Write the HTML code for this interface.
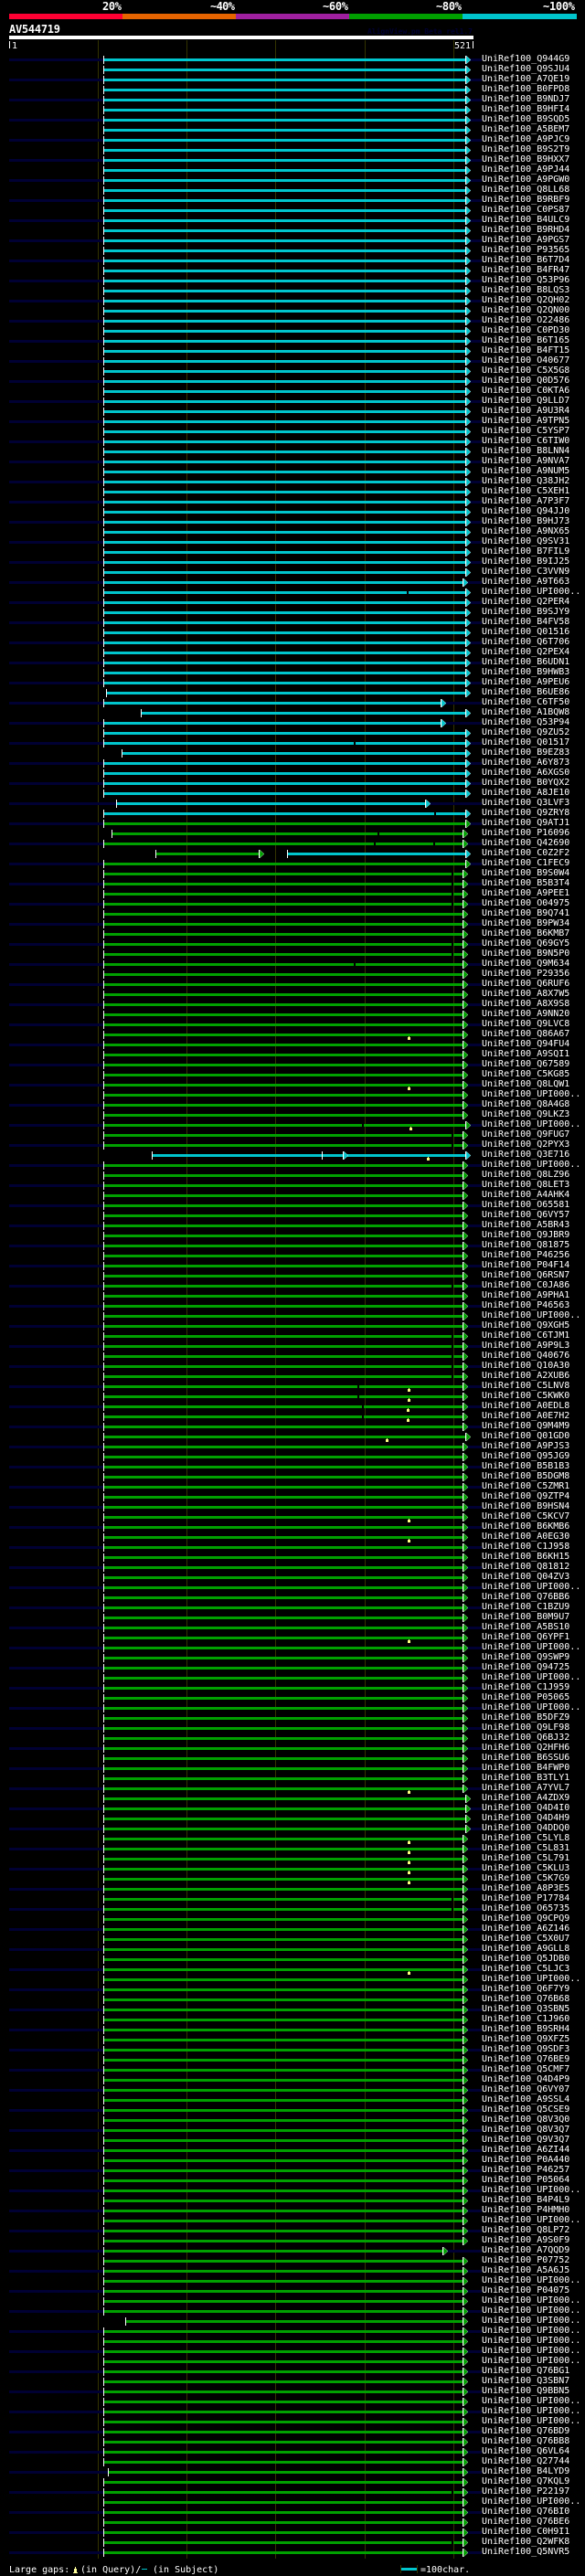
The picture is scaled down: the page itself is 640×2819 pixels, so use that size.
<!DOCTYPE html>
<html><head><meta charset="utf-8"><title>AV544719</title>
<style>
html,body{margin:0;padding:0;background:#000;width:640px;height:2819px;overflow:hidden}
#s{position:absolute;left:0;top:0}
pre{position:absolute;left:527px;top:59px;margin:0;font:10px/11px "DejaVu Sans Mono","Liberation Mono",monospace;color:#fff}
text{font-family:"DejaVu Sans Mono","Liberation Mono",monospace;fill:#fff}
.b{font-weight:bold;font-size:12px}
.n{font-size:10px}
</style></head><body>
<svg id="s" width="640" height="2819" viewBox="0 0 640 2819" xmlns="http://www.w3.org/2000/svg" shape-rendering="crispEdges">
<defs>
<g id="ac" shape-rendering="auto"><path d="M1 0L6 4.5L1 9Z" fill="#00c5cd" stroke="#fff" stroke-width=".35"/><rect width="1" height="9" fill="#fff"/></g>
<g id="ag" shape-rendering="auto"><path d="M1 0L6 4.5L1 9Z" fill="#00a000" stroke="#fff" stroke-width=".35"/><rect width="1" height="9" fill="#fff"/></g>

<g id="n1"><rect x="10" y="0" width="103" height="3" fill="#000033"/><rect x="510" y="0" width="17" height="3" fill="#000033"/></g>
<g id="n5"><use href="#n1"/><use href="#n1" y="22"/><use href="#n1" y="44"/><use href="#n1" y="66"/><use href="#n1" y="88"/></g>
<g id="n25"><use href="#n5"/><use href="#n5" y="110"/><use href="#n5" y="220"/><use href="#n5" y="330"/><use href="#n5" y="440"/></g>

<g id="c1"><rect x="113" y="0" width="1" height="9" fill="#fff"/><rect x="114" y="3" width="395" height="3" fill="#00c5cd"/><use href="#ac" x="509"/></g>
<g id="c5"><use href="#c1"/><use href="#c1" y="11"/><use href="#c1" y="22"/><use href="#c1" y="33"/><use href="#c1" y="44"/></g>
<g id="c25"><use href="#c5"/><use href="#c5" y="55"/><use href="#c5" y="110"/><use href="#c5" y="165"/><use href="#c5" y="220"/></g>

<g id="g1"><rect x="113" y="0" width="1" height="9" fill="#fff"/><rect x="114" y="3" width="392" height="3" fill="#00a000"/><use href="#ag" x="506"/></g>
<g id="g5"><use href="#g1"/><use href="#g1" y="11"/><use href="#g1" y="22"/><use href="#g1" y="33"/><use href="#g1" y="44"/></g>
<g id="g25"><use href="#g5"/><use href="#g5" y="55"/><use href="#g5" y="110"/><use href="#g5" y="165"/><use href="#g5" y="220"/></g>

<path id="er" d="M506 633h10v9h-10zM482 765h34v9h-34zM482 787h34v9h-34zM465 875h51v9h-51zM484 2459h30v9h-30zM113 754h3v9h-3zM113 776h41v9h-41zM113 820h20v9h-20zM113 875h14v9h-14zM113 908h9v9h-9zM113 2536h24v9h-24zM113 2701h5v9h-5zM113 930h403v9h-403zM113 1260h403v9h-403zM506 897h8v9h-8zM506 941h8v9h-8zM506 1227h8v9h-8zM506 1568h8v9h-8zM506 1964h8v9h-8zM506 1975h8v9h-8zM506 1986h8v9h-8zM506 1997h8v9h-8z"/>
<clipPath id="cl"><use href="#er"/></clipPath>
<g id="grid" fill="#333300"><rect x="107" y="44" width="1" height="2756"/><rect x="204" y="44" width="1" height="2756"/><rect x="301" y="44" width="1" height="2756"/><rect x="399" y="44" width="1" height="2756"/><rect x="496" y="44" width="1" height="2756"/></g>
</defs>

<rect x="10" y="15" width="124" height="6" fill="#ff0033"/>
<rect x="134" y="15" width="124" height="6" fill="#e66400"/>
<rect x="258" y="15" width="124" height="6" fill="#a020a0"/>
<rect x="382" y="15" width="124" height="6" fill="#00a000"/>
<rect x="506" y="15" width="125" height="6" fill="#00c5cd"/>
<text class="b" x="112" y="11" textLength="21">20%</text>
<text class="b" x="230" y="11" textLength="27">~40%</text>
<text class="b" x="353" y="11" textLength="28">~60%</text>
<text class="b" x="477" y="11" textLength="28">~80%</text>
<text class="b" x="594" y="11" textLength="35">~100%</text>
<text class="b" x="10" y="36" textLength="56">AV544719</text>
<text x="402" y="37" style="fill:#000033;font-size:8px;font-weight:bold" textLength="115">AlignView.pm Beta rel1.7</text>
<rect x="10" y="39" width="508" height="4" fill="#fff"/>
<rect x="10" y="45" width="1" height="8" fill="#fff"/>
<text class="n" x="13" y="53">1</text>
<text class="n" x="497" y="53">521</text>
<rect x="517" y="45" width="1" height="8" fill="#fff"/>

<use href="#grid"/>
<g transform="translate(0,64)"><use href="#n25"/><use href="#n25" y="550"/><use href="#n25" y="1100"/><use href="#n25" y="1650"/><use href="#n25" y="2200"/></g>

<use href="#c25" y="61"/><use href="#c25" y="336"/><use href="#c25" y="611"/><use href="#c1" y="886"/>
<use href="#g25" y="897"/><use href="#g25" y="1172"/><use href="#g25" y="1447"/><use href="#g25" y="1722"/><use href="#g25" y="1997"/><use href="#g25" y="2272"/>
<use href="#g5" y="2547"/><use href="#g5" y="2602"/><use href="#g5" y="2657"/><use href="#g5" y="2712"/>
<use href="#g1" y="2767"/><use href="#g1" y="2778"/><use href="#g1" y="2789"/>

<path d="M445 647h2v3h-2zM387 812h2v3h-2zM475 889h2v3h-2zM413 911h2v3h-2zM409 922h2v3h-2zM474 922h2v3h-2zM494 955h2v3h-2zM494 966h2v3h-2zM494 977h2v3h-2zM494 988h2v3h-2zM494 1032h2v3h-2zM494 1043h2v3h-2zM387 1054h2v3h-2zM396 1230h2v3h-2zM494 1241h2v3h-2zM494 1252h2v3h-2zM494 1406h2v3h-2zM494 1461h2v3h-2zM494 1472h2v3h-2zM494 1483h2v3h-2zM494 1494h2v3h-2zM494 1505h2v3h-2zM391 1516h2v3h-2zM391 1527h2v3h-2zM396 1538h2v3h-2zM396 1549h2v3h-2zM494 2077h2v3h-2zM494 2088h2v3h-2zM494 2726h2v3h-2zM494 2781h2v3h-2z" fill="#000"/>

<use href="#er" fill="#000"/>
<g clip-path="url(#cl)"><use href="#grid"/></g>

<g fill="#000033">
<rect x="511" y="636" width="5" height="3"/>
<rect x="486" y="768" width="30" height="3"/>
<rect x="486" y="790" width="30" height="3"/>
<rect x="469" y="878" width="47" height="3"/>
<rect x="488" y="2462" width="27" height="3"/>
<rect x="113" y="878" width="14" height="3"/>
<rect x="113" y="2704" width="5" height="3"/>
</g>
<g fill="#fff">
<rect x="116" y="754" width="1" height="9"/>
<rect x="154" y="776" width="1" height="9"/>
<rect x="133" y="820" width="1" height="9"/>
<rect x="127" y="875" width="1" height="9"/>
<rect x="122" y="908" width="1" height="9"/>
<rect x="137" y="2536" width="1" height="9"/>
<rect x="118" y="2701" width="1" height="9"/>
<rect x="170" y="930" width="1" height="9"/>
<rect x="314" y="930" width="1" height="9"/>
<rect x="166" y="1260" width="1" height="9"/>
</g>
<use href="#ac" x="506" y="633"/>
<use href="#ac" x="482" y="765"/>
<use href="#ac" x="482" y="787"/>
<use href="#ac" x="465" y="875"/>
<use href="#ag" x="484" y="2459"/>
<rect x="171" y="933" width="112" height="3" fill="#00a000"/>
<use href="#ag" x="283" y="930"/>
<rect x="315" y="933" width="194" height="3" fill="#00c5cd"/>
<use href="#ac" x="509" y="930"/>
<rect x="167" y="1263" width="342" height="3" fill="#00c5cd"/>
<rect x="352" y="1260" width="1" height="9" fill="#fff"/>
<use href="#ac" x="375" y="1260"/>
<use href="#ac" x="509" y="1260"/>
<g fill="#00a000">
<rect x="506" y="900" width="3" height="3"/><rect x="506" y="944" width="3" height="3"/><rect x="506" y="1230" width="3" height="3"/><rect x="506" y="1571" width="3" height="3"/><rect x="506" y="1967" width="3" height="3"/><rect x="506" y="1978" width="3" height="3"/><rect x="506" y="1989" width="3" height="3"/><rect x="506" y="2000" width="3" height="3"/>
</g>
<use href="#ag" x="509" y="897"/><use href="#ag" x="509" y="941"/><use href="#ag" x="509" y="1227"/><use href="#ag" x="509" y="1568"/><use href="#ag" x="509" y="1964"/><use href="#ag" x="509" y="1975"/><use href="#ag" x="509" y="1986"/><use href="#ag" x="509" y="1997"/>

<path fill="#ffff80" d="M447 1134h1v1h1v3h-3v-3h1zM447 1189h1v1h1v3h-3v-3h1zM449 1233h1v1h1v3h-3v-3h1zM468 1266h1v1h1v3h-3v-3h1zM447 1519h1v1h1v3h-3v-3h1zM447 1530h1v1h1v3h-3v-3h1zM446 1541h1v1h1v3h-3v-3h1zM446 1552h1v1h1v3h-3v-3h1zM423 1574h1v1h1v3h-3v-3h1zM447 1662h1v1h1v3h-3v-3h1zM447 1684h1v1h1v3h-3v-3h1zM447 1794h1v1h1v3h-3v-3h1zM447 1959h1v1h1v3h-3v-3h1zM447 2014h1v1h1v3h-3v-3h1zM447 2025h1v1h1v3h-3v-3h1zM447 2036h1v1h1v3h-3v-3h1zM447 2047h1v1h1v3h-3v-3h1zM447 2058h1v1h1v3h-3v-3h1zM447 2157h1v1h1v3h-3v-3h1z"/>

<text class="n" x="10" y="2815">Large gaps:</text>
<path fill="#ffff99" d="M82 2809h1v2h1v4h1v1h-5v-1h1v-4h1z"/>
<text class="n" x="88" y="2815">(in Query)/</text>
<rect x="155" y="2811" width="6" height="1" fill="#00c5cd"/>
<text class="n" x="167" y="2815">(in Subject)</text>
<rect x="438" y="2807" width="1" height="9" fill="#333300"/>
<rect x="439" y="2810" width="17" height="3" fill="#00c5cd"/>
<rect x="456" y="2807" width="1" height="9" fill="#333300"/>
<text class="n" x="460" y="2815">=100char.</text>
</svg>
<pre>UniRef100_Q944G9
UniRef100_Q9SJU4
UniRef100_A7QE19
UniRef100_B0FPD8
UniRef100_B9NDJ7
UniRef100_B9HFI4
UniRef100_B9SQD5
UniRef100_A5BEM7
UniRef100_A9PJC9
UniRef100_B9S2T9
UniRef100_B9HXX7
UniRef100_A9PJ44
UniRef100_A9PGW0
UniRef100_Q8LL68
UniRef100_B9RBF9
UniRef100_C0PS87
UniRef100_B4ULC9
UniRef100_B9RHD4
UniRef100_A9PGS7
UniRef100_P93565
UniRef100_B6T7D4
UniRef100_B4FR47
UniRef100_Q53P96
UniRef100_B8LQS3
UniRef100_Q2QH02
UniRef100_Q2QN00
UniRef100_O22486
UniRef100_C0PD30
UniRef100_B6T165
UniRef100_B4FT15
UniRef100_O40677
UniRef100_C5X5G8
UniRef100_Q0D576
UniRef100_C0KTA6
UniRef100_Q9LLD7
UniRef100_A9U3R4
UniRef100_A9TPN5
UniRef100_C5YSP7
UniRef100_C6TIW0
UniRef100_B8LNN4
UniRef100_A9NVA7
UniRef100_A9NUM5
UniRef100_Q38JH2
UniRef100_C5XEH1
UniRef100_A7P3F7
UniRef100_Q94JJ0
UniRef100_B9HJ73
UniRef100_A9NX65
UniRef100_Q9SV31
UniRef100_B7FIL9
UniRef100_B9IJ25
UniRef100_C3VVN9
UniRef100_A9T663
UniRef100_UPI000..
UniRef100_Q2PER4
UniRef100_B9SJY9
UniRef100_B4FV58
UniRef100_Q01516
UniRef100_Q6T706
UniRef100_Q2PEX4
UniRef100_B6UDN1
UniRef100_B9HWB3
UniRef100_A9PEU6
UniRef100_B6UE86
UniRef100_C6TF50
UniRef100_A1BQW8
UniRef100_Q53P94
UniRef100_Q9ZU52
UniRef100_Q01517
UniRef100_B9EZ83
UniRef100_A6Y873
UniRef100_A6XGS0
UniRef100_B0YQX2
UniRef100_A8JE10
UniRef100_Q3LVF3
UniRef100_Q9ZRY8
UniRef100_Q9ATJ1
UniRef100_P16096
UniRef100_Q42690
UniRef100_C0Z2F2
UniRef100_C1FEC9
UniRef100_B9S0W4
UniRef100_B5B3T4
UniRef100_A9PEE1
UniRef100_O04975
UniRef100_B9Q741
UniRef100_B9PW34
UniRef100_B6KMB7
UniRef100_Q69GY5
UniRef100_B9N5P0
UniRef100_Q9M634
UniRef100_P29356
UniRef100_Q6RUF6
UniRef100_A8X7W5
UniRef100_A8X9S8
UniRef100_A9NN20
UniRef100_Q9LVC8
UniRef100_Q86A67
UniRef100_Q94FU4
UniRef100_A9SQI1
UniRef100_Q67589
UniRef100_C5KG85
UniRef100_Q8LQW1
UniRef100_UPI000..
UniRef100_Q8A4G8
UniRef100_Q9LKZ3
UniRef100_UPI000..
UniRef100_Q9FUG7
UniRef100_Q2PYX3
UniRef100_Q3E716
UniRef100_UPI000..
UniRef100_Q8LZ96
UniRef100_Q8LET3
UniRef100_A4AHK4
UniRef100_O65581
UniRef100_Q6VY57
UniRef100_A5BR43
UniRef100_Q9JBR9
UniRef100_Q81875
UniRef100_P46256
UniRef100_P04F14
UniRef100_Q6RSN7
UniRef100_C0JA86
UniRef100_A9PHA1
UniRef100_P46563
UniRef100_UPI000..
UniRef100_Q9XGH5
UniRef100_C6TJM1
UniRef100_A9P9L3
UniRef100_Q40676
UniRef100_Q10A30
UniRef100_A2XUB6
UniRef100_C5LNV8
UniRef100_C5KWK0
UniRef100_A0EDL8
UniRef100_A0E7H2
UniRef100_Q9M4M9
UniRef100_Q01GD0
UniRef100_A9PJS3
UniRef100_Q95JG9
UniRef100_B5B1B3
UniRef100_B5DGM8
UniRef100_C5ZMR1
UniRef100_Q9ZTP4
UniRef100_B9HSN4
UniRef100_C5KCV7
UniRef100_B6KMB6
UniRef100_A0EG30
UniRef100_C1J958
UniRef100_B6KH15
UniRef100_Q81812
UniRef100_Q04ZV3
UniRef100_UPI000..
UniRef100_Q76BB6
UniRef100_C1BZU9
UniRef100_B0M9U7
UniRef100_A5BS10
UniRef100_Q6YPF1
UniRef100_UPI000..
UniRef100_Q9SWP9
UniRef100_Q94725
UniRef100_UPI000..
UniRef100_C1J959
UniRef100_P05065
UniRef100_UPI000..
UniRef100_B5DFZ9
UniRef100_Q9LF98
UniRef100_Q6BJ32
UniRef100_Q2HFH6
UniRef100_B6SSU6
UniRef100_B4FWP0
UniRef100_B3TLY1
UniRef100_A7YVL7
UniRef100_A4ZDX9
UniRef100_Q4D4I0
UniRef100_Q4D4H9
UniRef100_Q4DDQ0
UniRef100_C5LYL8
UniRef100_C5L831
UniRef100_C5L791
UniRef100_C5KLU3
UniRef100_C5K7G9
UniRef100_A8P3E5
UniRef100_P17784
UniRef100_O65735
UniRef100_Q9CPQ9
UniRef100_A6Z146
UniRef100_C5X0U7
UniRef100_A9GLL8
UniRef100_Q5JDB0
UniRef100_C5LJC3
UniRef100_UPI000..
UniRef100_Q6F7Y9
UniRef100_Q76B68
UniRef100_Q3SBN5
UniRef100_C1J960
UniRef100_B9SRH4
UniRef100_Q9XFZ5
UniRef100_Q9SDF3
UniRef100_Q76BE9
UniRef100_Q5CMF7
UniRef100_Q4D4P9
UniRef100_Q6VY07
UniRef100_A9SSL4
UniRef100_Q5CSE9
UniRef100_Q8V3Q0
UniRef100_Q8V3Q7
UniRef100_Q9V3Q7
UniRef100_A6ZI44
UniRef100_P0A440
UniRef100_P46257
UniRef100_P05064
UniRef100_UPI000..
UniRef100_B4P4L9
UniRef100_P4HMH0
UniRef100_UPI000..
UniRef100_Q8LP72
UniRef100_A9S0F9
UniRef100_A7QQD9
UniRef100_P07752
UniRef100_A5A6J5
UniRef100_UPI000..
UniRef100_P04075
UniRef100_UPI000..
UniRef100_UPI000..
UniRef100_UPI000..
UniRef100_UPI000..
UniRef100_UPI000..
UniRef100_UPI000..
UniRef100_UPI000..
UniRef100_Q76BG1
UniRef100_Q3SBN7
UniRef100_Q9BBN5
UniRef100_UPI000..
UniRef100_UPI000..
UniRef100_UPI000..
UniRef100_Q76BD9
UniRef100_Q76BB8
UniRef100_Q6VL64
UniRef100_Q27744
UniRef100_B4LYD9
UniRef100_Q7KQL9
UniRef100_P22197
UniRef100_UPI000..
UniRef100_Q76BI0
UniRef100_Q76BE6
UniRef100_C0H9I1
UniRef100_Q2WFK8
UniRef100_Q5NVR5</pre>
</body></html>
